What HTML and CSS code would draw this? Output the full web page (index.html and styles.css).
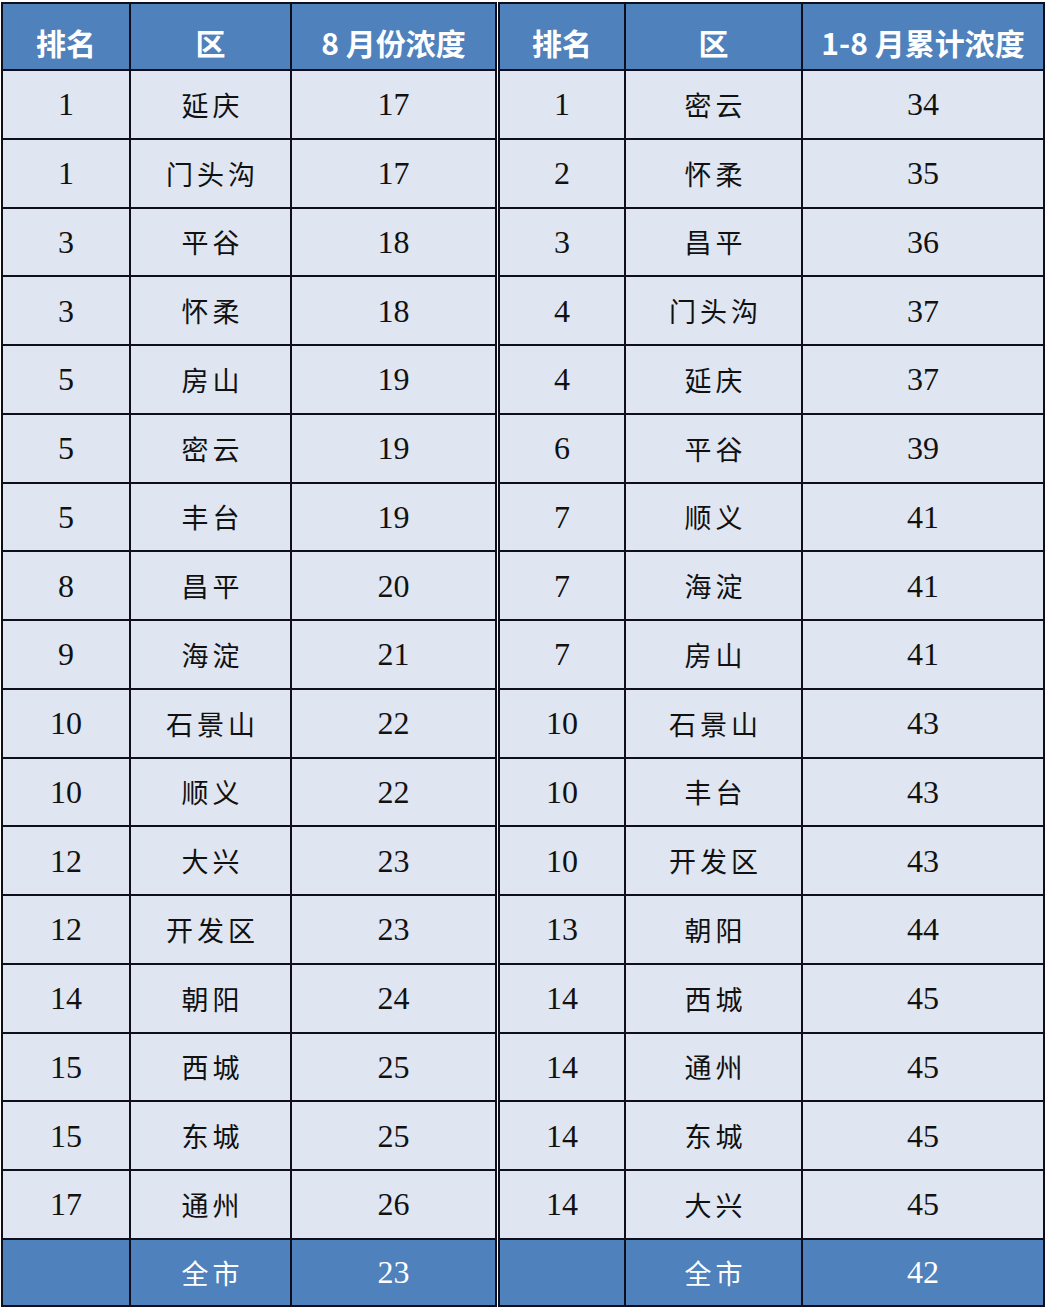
FILE: index.html
```html
<!DOCTYPE html>
<html lang="zh-CN">
<head>
<meta charset="utf-8">
<title>北京各区PM2.5浓度排名</title>
<link rel="stylesheet" href="styles.css">
</head>
<body>
<div class="sheet">
  <table class="tbl tbl-left">
    <colgroup><col class="c-rank-l"><col class="c-name-l"><col class="c-val-l"></colgroup>
    <thead>
      <tr class="head"><th>排名</th><th>区</th><th>8 月份浓度</th></tr>
    </thead>
    <tbody>
      <tr><td class="num">1</td><td class="name">延庆</td><td class="num">17</td></tr>
      <tr><td class="num">1</td><td class="name">门头沟</td><td class="num">17</td></tr>
      <tr><td class="num">3</td><td class="name">平谷</td><td class="num">18</td></tr>
      <tr><td class="num">3</td><td class="name">怀柔</td><td class="num">18</td></tr>
      <tr><td class="num">5</td><td class="name">房山</td><td class="num">19</td></tr>
      <tr><td class="num">5</td><td class="name">密云</td><td class="num">19</td></tr>
      <tr><td class="num">5</td><td class="name">丰台</td><td class="num">19</td></tr>
      <tr><td class="num">8</td><td class="name">昌平</td><td class="num">20</td></tr>
      <tr><td class="num">9</td><td class="name">海淀</td><td class="num">21</td></tr>
      <tr><td class="num">10</td><td class="name">石景山</td><td class="num">22</td></tr>
      <tr><td class="num">10</td><td class="name">顺义</td><td class="num">22</td></tr>
      <tr><td class="num">12</td><td class="name">大兴</td><td class="num">23</td></tr>
      <tr><td class="num">12</td><td class="name">开发区</td><td class="num">23</td></tr>
      <tr><td class="num">14</td><td class="name">朝阳</td><td class="num">24</td></tr>
      <tr><td class="num">15</td><td class="name">西城</td><td class="num">25</td></tr>
      <tr><td class="num">15</td><td class="name">东城</td><td class="num">25</td></tr>
      <tr><td class="num">17</td><td class="name">通州</td><td class="num">26</td></tr>
    </tbody>
    <tfoot>
      <tr class="total"><td class="num"></td><td class="name">全市</td><td class="num">23</td></tr>
    </tfoot>
  </table>
  <table class="tbl tbl-right">
    <colgroup><col class="c-rank-r"><col class="c-name-r"><col class="c-val-r"></colgroup>
    <thead>
      <tr class="head"><th>排名</th><th>区</th><th>1-8 月累计浓度</th></tr>
    </thead>
    <tbody>
      <tr><td class="num">1</td><td class="name">密云</td><td class="num">34</td></tr>
      <tr><td class="num">2</td><td class="name">怀柔</td><td class="num">35</td></tr>
      <tr><td class="num">3</td><td class="name">昌平</td><td class="num">36</td></tr>
      <tr><td class="num">4</td><td class="name">门头沟</td><td class="num">37</td></tr>
      <tr><td class="num">4</td><td class="name">延庆</td><td class="num">37</td></tr>
      <tr><td class="num">6</td><td class="name">平谷</td><td class="num">39</td></tr>
      <tr><td class="num">7</td><td class="name">顺义</td><td class="num">41</td></tr>
      <tr><td class="num">7</td><td class="name">海淀</td><td class="num">41</td></tr>
      <tr><td class="num">7</td><td class="name">房山</td><td class="num">41</td></tr>
      <tr><td class="num">10</td><td class="name">石景山</td><td class="num">43</td></tr>
      <tr><td class="num">10</td><td class="name">丰台</td><td class="num">43</td></tr>
      <tr><td class="num">10</td><td class="name">开发区</td><td class="num">43</td></tr>
      <tr><td class="num">13</td><td class="name">朝阳</td><td class="num">44</td></tr>
      <tr><td class="num">14</td><td class="name">西城</td><td class="num">45</td></tr>
      <tr><td class="num">14</td><td class="name">通州</td><td class="num">45</td></tr>
      <tr><td class="num">14</td><td class="name">东城</td><td class="num">45</td></tr>
      <tr><td class="num">14</td><td class="name">大兴</td><td class="num">45</td></tr>
    </tbody>
    <tfoot>
      <tr class="total"><td class="num"></td><td class="name">全市</td><td class="num">42</td></tr>
    </tfoot>
  </table>
</div>
</body>
</html>
```

FILE: styles.css
```css
html, body {
  margin: 0;
  padding: 0;
  background: #ffffff;
}

.sheet {
  display: flex;
  align-items: flex-start;
  gap: 1px;
  padding: 2px 0 0 1px;
}

.tbl {
  border-collapse: separate;
  border-spacing: 0;
  table-layout: fixed;
  border-top: 2px solid #0e0e1c;
  border-left: 2px solid #0e0e1c;
}

.tbl-left { width: 496px; }
.tbl-right { width: 547px; }

.c-rank-l { width: 128px; }
.c-name-l { width: 161px; }
.c-val-l { width: 205px; }

.c-rank-r { width: 126px; }
.c-name-r { width: 177px; }
.c-val-r { width: 242px; }

.tbl th,
.tbl td {
  border-right: 2px solid #0e0e1c;
  border-bottom: 2px solid #0e0e1c;
  padding: 0;
  text-align: center;
  vertical-align: middle;
  line-height: 1;
  white-space: nowrap;
}

.tbl tr { height: 68.75px; }

.tbl tr.head { height: 67px; }

.tbl th {
  background: #4f81bd;
  color: #ffffff;
  font-family: "Noto Sans CJK SC", "Liberation Sans", sans-serif;
  font-weight: 700;
  font-size: 30px;
  padding-top: 10px;
}

.tbl td {
  background: #dfe6f1;
  color: #111111;
}

.tbl .num {
  font-family: "Liberation Serif", "Noto Sans CJK SC", serif;
  font-size: 32px;
}

.tbl .name {
  font-family: "Noto Sans CJK SC", sans-serif;
  font-weight: 400;
  font-size: 27px;
  letter-spacing: 4px;
  padding-left: 4px;
}

.tbl tr.total { height: 67px; }

.tbl tr.total td {
  background: #4f81bd;
  color: #ffffff;
}
```
